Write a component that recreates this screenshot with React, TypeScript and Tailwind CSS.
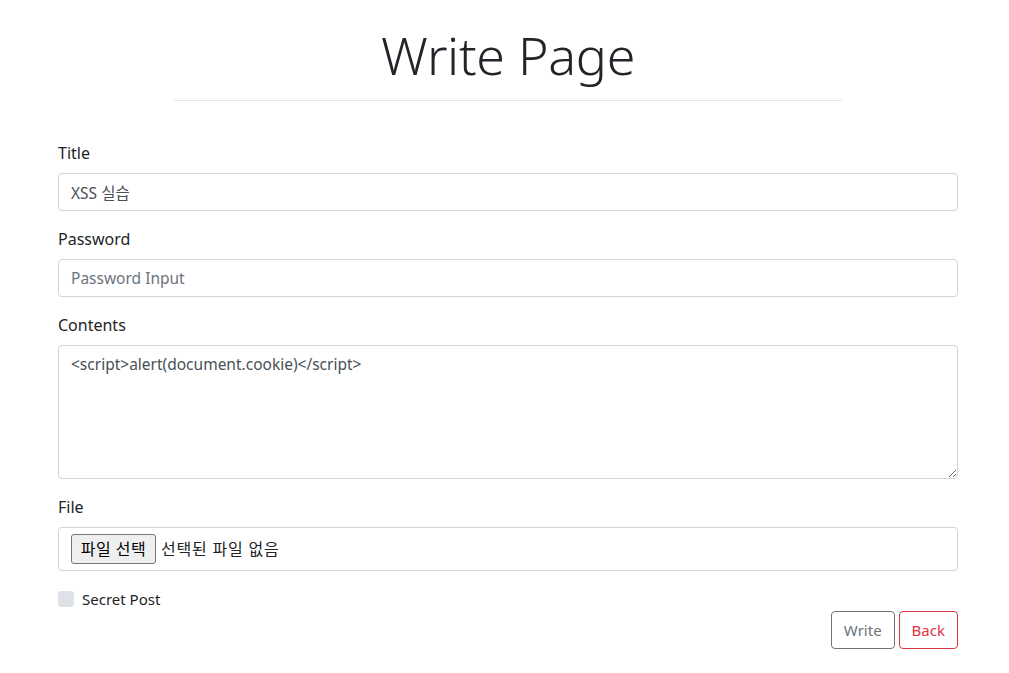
const font = { fontFamily: '"Noto Sans", "Noto Sans CJK KR", sans-serif' }

const Label = ({ children }: { children: React.ReactNode }) => (
  <label className="block mb-2 text-[16px] leading-6 text-[#212529]">{children}</label>
)

export default function App() {
  return (
    <div className="min-h-screen bg-white text-[#212529]" style={font}>
      <div className="w-[900px] ml-[58px] pt-[20px]">
        <h1 className="text-center text-[52px] leading-[70px] font-light text-[#212529] tracking-[-0.3px]">
          Write Page
        </h1>
        <hr className="w-[668px] mx-auto mt-[10px] mb-[40px] border-t border-[#e5e5e5]" />

        <div className="mb-4">
          <Label>Title</Label>
          <input
            defaultValue="XSS 실습"
            className="w-full h-[38px] px-3 text-[15.5px] text-[#495057] border border-[#ced4da] rounded-[4px] outline-none"
            style={font}
          />
        </div>

        <div className="mb-4">
          <Label>Password</Label>
          <input
            type="password"
            placeholder="Password Input"
            className="w-full h-[38px] px-3 text-[15.5px] text-[#495057] placeholder:text-[#6c757d] border border-[#ced4da] rounded-[4px] outline-none"
            style={font}
          />
        </div>

        <div className="mb-4">
          <Label>Contents</Label>
          <textarea
            defaultValue="<script>alert(document.cookie)</script>"
            className="block w-full h-[134px] px-3 py-[6px] text-[15.5px] leading-6 text-[#495057] border border-[#ced4da] rounded-[4px] outline-none"
            style={font}
          />
        </div>

        <div className="mb-4">
          <Label>File</Label>
          <div className="w-full h-[44px] flex items-center px-3 border border-[#ced4da] rounded-[4px]">
            <span className="h-[30px] w-[85px] justify-center flex items-center text-[16px] tracking-[0.5px] text-black bg-[#efefef] border border-[#767676] rounded-[3px]">
              파일 선택
            </span>
            <span className="ml-[5px] text-[16px] tracking-[0.8px] text-[#212529]">선택된 파일 없음</span>
          </div>
        </div>

        <div className="flex items-center h-6">
          <span className="w-4 h-4 rounded-[3px] bg-[#dee2e6]" />
          <span className="ml-2 text-[15px] text-[#212529]">Secret Post</span>
        </div>

        <div className="flex justify-end gap-1">
          <button className="h-[38px] px-3 text-[15px] text-[#6c757d] border border-[#6c757d] rounded-[4px]">
            Write
          </button>
          <button className="h-[38px] px-3 text-[15px] text-[#dc3545] border border-[#dc3545] rounded-[4px]">
            Back
          </button>
        </div>
      </div>
    </div>
  )
}
